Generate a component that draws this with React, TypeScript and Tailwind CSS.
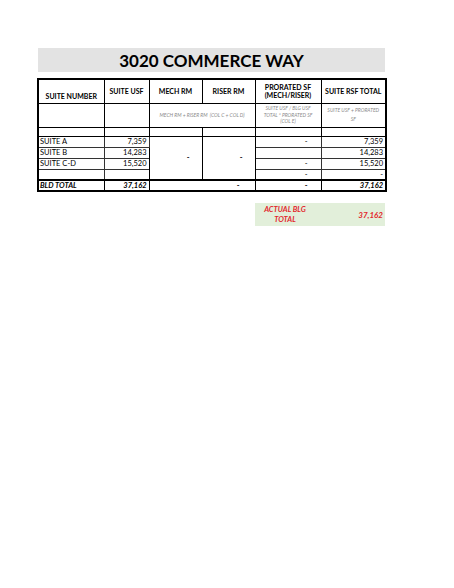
import React from 'react';

const font = { fontFamily: 'Lato, "Open Sans", sans-serif' };

const rows = [
  { name: 'SUITE A', usf: '7,359', pro: '-', rsf: '7,359' },
  { name: 'SUITE B', usf: '14,283', pro: '', rsf: '14,283' },
  { name: 'SUITE C-D', usf: '15,520', pro: '-', rsf: '15,520' },
  { name: '', usf: '', pro: '-', rsf: '-' },
];

export default function App() {
  return (
    <div className="w-[454px] h-[588px] bg-white text-black" style={font}>
      <div className="pt-[48px] pl-[38px]">
        {/* Title */}
        <div className="w-[347px] h-[24px] bg-[#e3e3e3] flex items-center justify-center">
          <span className="text-[17px] font-bold leading-none">3020 COMMERCE WAY</span>
        </div>
      </div>

      <div className="pl-[37px] pt-[6px]">
        <table className="border-collapse border-2 border-black table-fixed w-[348px]">
          <colgroup>
            <col className="w-[66px]" />
            <col className="w-[45px]" />
            <col className="w-[53px]" />
            <col className="w-[53px]" />
            <col className="w-[66px]" />
            <col className="w-[65px]" />
          </colgroup>
          <tbody>
            {/* Header */}
            <tr className="h-[24px] text-[7px] font-bold leading-[8px] text-center">
              <td className="border border-black align-bottom pb-[3px] p-0">SUITE NUMBER</td>
              <td className="border border-black p-0">SUITE USF</td>
              <td className="border border-black p-0">MECH RM</td>
              <td className="border border-black p-0">RISER RM</td>
              <td className="border border-black p-0">
                PRORATED SF
                <br />
                (MECH/RISER)
              </td>
              <td className="border border-black p-0">SUITE RSF TOTAL</td>
            </tr>

            {/* Formulas */}
            <tr className="h-[24px] text-[5px] italic text-[#8a8a8a] text-center">
              <td className="border border-black p-0"></td>
              <td className="border border-black p-0"></td>
              <td colSpan={2} className="border border-black p-0 leading-[6px]">
                MECH RM + RISER RM&nbsp;&nbsp;(COL C + COL D)
              </td>
              <td className="border border-black p-0 leading-[6.5px]">
                SUITE USF / BLG USF
                <br />
                TOTAL * PRORATED SF
                <br />
                (COL E)
              </td>
              <td className="border border-black p-0 leading-[9px]">
                SUITE USF + PRORATED
                <br />
                SF
              </td>
            </tr>

            {/* Spacer */}
            <tr className="h-[9px]">
              {[0, 1, 2, 3, 4, 5].map((i) => (
                <td key={i} className="border border-black p-0"></td>
              ))}
            </tr>

            {/* Suites */}
            {rows.map((r, i) => (
              <tr key={i} className="h-[11px] text-[7.5px] leading-none">
                <td className="border border-[#333] p-0 pl-[1px]">{r.name}</td>
                <td className="border border-[#333] p-0 pr-[2px] text-right">{r.usf}</td>
                {i === 0 && (
                  <>
                    <td rowSpan={4} className="border border-black p-0 pr-[12px] text-right font-bold">
                      -
                    </td>
                    <td rowSpan={4} className="border border-black p-0 pr-[12px] text-right font-bold">
                      -
                    </td>
                  </>
                )}
                <td className="border border-[#333] p-0 pr-[13px] text-right">{r.pro}</td>
                <td className="border border-[#333] p-0 pr-[2px] text-right">{r.rsf}</td>
              </tr>
            ))}

            {/* Total */}
            <tr className="h-[11px] text-[7.5px] leading-none font-bold italic">
              <td className="border border-black border-t-2 p-0 pl-[1px]">BLD TOTAL</td>
              <td className="border border-black border-t-2 p-0 pr-[2px] text-right">37,162</td>
              <td colSpan={2} className="border border-black border-t-2 p-0 pr-[15px] text-right not-italic">
                -
              </td>
              <td className="border border-black border-t-2 p-0 pr-[13px] text-right not-italic">-</td>
              <td className="border border-black border-t-2 p-0 pr-[2px] text-right">37,162</td>
            </tr>
          </tbody>
        </table>
      </div>

      {/* Actual building total */}
      <div className="pl-[255px] pt-[11px]">
        <div className="w-[130px] h-[23px] bg-[#e2efda] flex items-center text-[#e3262b] font-bold italic">
          <div className="w-[60px] text-center text-[7.5px] leading-[10px]">
            ACTUAL BLG
            <br />
            TOTAL
          </div>
          <div className="flex-1 text-right pr-[2px] text-[8px]">37,162</div>
        </div>
      </div>
    </div>
  );
}
